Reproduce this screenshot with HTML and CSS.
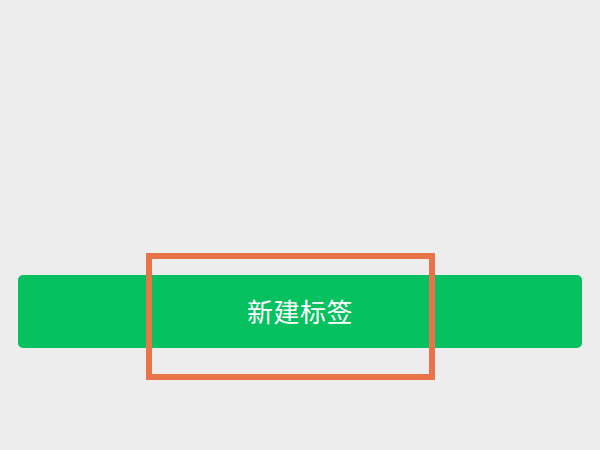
FILE: index.html
```html
<!DOCTYPE html>
<html lang="zh-CN">
<head>
<meta charset="utf-8">
<title>新建标签</title>
<link rel="stylesheet" href="styles.css">
</head>
<body>
<main class="page">
  <div class="actions">
    <button class="btn-primary" type="button">新建标签</button>
    <div class="highlight"></div>
  </div>
</main>
</body>
</html>
```
FILE: styles.css
```css
html, body {
  margin: 0;
  padding: 0;
  background: #ededed;
}
.page {
  width: 600px;
  height: 450px;
  display: flex;
  flex-direction: column;
  justify-content: flex-start;
  padding: 275px 18px 0;
  box-sizing: border-box;
}
.actions {
  position: relative;
}
.btn-primary {
  display: flex;
  align-items: center;
  justify-content: center;
  width: 100%;
  height: 73px;
  border: none;
  border-radius: 5px;
  background: #07c160;
  color: #ffffff;
  font-family: "Noto Sans CJK SC", "Noto Sans", sans-serif;
  font-size: 26px;
  letter-spacing: 0.5px;
  padding: 0 0 2px;
}
.highlight {
  position: absolute;
  left: 128px;
  top: -22px;
  width: 289px;
  height: 127px;
  border: 6px solid #ea7449;
  box-sizing: border-box;
  pointer-events: none;
}
```
